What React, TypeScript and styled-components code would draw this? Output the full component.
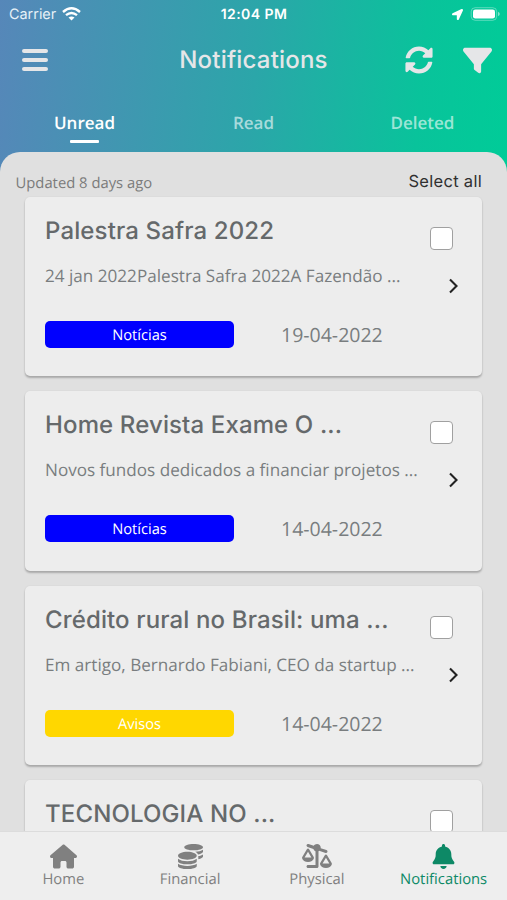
import React from 'react';
import styled, { createGlobalStyle } from 'styled-components';
import { FaCoins, FaLocationArrow, FaSyncAlt } from 'react-icons/fa';
import { FaBell, FaFilter, FaHouse, FaScaleUnbalancedFlip } from 'react-icons/fa6';

const GlobalStyle = createGlobalStyle`
  * { box-sizing: border-box; }
  html, body { margin: 0; padding: 0; }
  body {
    font-family: "Open Sans", "Noto Sans", sans-serif;
    text-rendering: geometricPrecision;
    overflow: hidden;
  }
  button { border: 0; padding: 0; background: none; font: inherit; color: inherit; text-rendering: inherit; letter-spacing: inherit; }
  svg { display: block; }
`;

const Screen = styled.div`
  width: 507px;
  height: 900px;
  display: flex;
  flex-direction: column;
  overflow: hidden;
  background: linear-gradient(95deg, #5687b9 0%, #2ba6a9 50%, #09c39b 82%, #00cc98 100%) 0 0 / 100% 180px no-repeat;
`;

const StatusBar = styled.div`
  height: 28px;
  padding: 0 7px 0 9px;
  display: grid;
  grid-template-columns: 1fr auto 1fr;
  align-items: center;
  color: #fff;
  font: 400 14.4px/28px Inter, sans-serif;
`;

const Carrier = styled.div`
  display: flex;
  align-items: center;
  gap: 6px;
  color: #e6f1f7;
`;

const CarrierName = styled.span`
  padding-top: 1px;
  line-height: 27px;
`;

const Clock = styled.div`
  margin-right: 1px;
  padding-top: 1px;
  line-height: 27px;
  font-weight: 600;
  font-size: 14px;
  letter-spacing: 0.45px;
`;

const Indicators = styled.div`
  display: flex;
  justify-content: flex-end;
  align-items: center;
  gap: 7px;
`;

const Header = styled.header`
  height: 64px;
  padding: 0 15px 0 22px;
  display: grid;
  grid-template-columns: 1fr auto 1fr;
  align-items: center;
  color: #e5e6e8;
`;

const MenuButton = styled.button`
  width: 26px;
  display: grid;
  gap: 5.3px;
`;

const MenuLine = styled.span`
  height: 4px;
  border-radius: 2px;
  background: #e5e6e8;
`;

const PageTitle = styled.h1`
  margin: 0 7px 0 0;
  font: 500 24px/30px Inter, sans-serif;
  letter-spacing: 0.2px;
`;

const Actions = styled.div`
  display: flex;
  justify-content: flex-end;
  align-items: center;
  gap: 30px;
`;

const Tabs = styled.nav`
  height: 60px;
  display: grid;
  grid-template-columns: repeat(3, 1fr);
`;

const Tab = styled.button<{ $active?: boolean }>`
  display: flex;
  flex-direction: column;
  align-items: center;
  padding-top: 19px;
  font-size: 17px;
  line-height: 24px;
  font-weight: 600;
  color: ${(p) => (p.$active ? '#fff' : 'rgba(255, 255, 255, 0.6)')};

  &::after {
    content: "";
    width: 29px;
    height: 3px;
    margin-top: 5px;
    border-radius: 1px;
    background: ${(p) => (p.$active ? '#fff' : 'transparent')};
  }
`;

const Sheet = styled.main`
  flex: 1;
  min-height: 0;
  overflow: hidden;
  border-radius: 20px 20px 0 0;
  background: #e0e0e0;
`;

const ListHeader = styled.div`
  height: 44.5px;
  padding: 0 25px 0 15.5px;
  display: flex;
  justify-content: space-between;
`;

const Updated = styled.span`
  padding-top: 20px;
  font-size: 14.8px;
  line-height: 22px;
  color: #7b7b7b;
`;

const SelectAll = styled.button`
  height: 22px;
  margin-top: 18px;
  font: 400 16.5px/22px Inter, sans-serif;
  letter-spacing: 0.3px;
  color: #303030;
`;

const List = styled.div`
  padding: 0 25px;
  display: flex;
  flex-direction: column;
  gap: 15px;
`;

const Card = styled.article`
  height: 179.5px;
  flex: none;
  padding: 16px 20px 0;
  display: grid;
  grid-template-columns: 1fr 32px;
  border-radius: 5px;
  background: #ededed;
  box-shadow: 0 2px 2px rgba(0, 0, 0, 0.24), 0 0 2px rgba(0, 0, 0, 0.07);
`;

const CardBody = styled.div`
  min-width: 0;
`;

const CardTitle = styled.h2`
  margin: 0;
  height: 36px;
  font: 500 24px/36px Inter, sans-serif;
  letter-spacing: 0.13px;
  color: #65696b;
  white-space: nowrap;
`;

const Excerpt = styled.p`
  margin: 16px 0 0;
  height: 24px;
  font-size: 17.13px;
  line-height: 24px;
  color: #797d7f;
  white-space: nowrap;
`;

const Meta = styled.div`
  margin-top: 32px;
  display: flex;
  align-items: center;
  gap: 47px;
`;

const Badge = styled.span<{ $color: string }>`
  width: 189px;
  height: 27px;
  border-radius: 5px;
  background: ${(p) => p.$color};
  color: #fff;
  text-align: center;
  font-size: 14.7px;
  line-height: 29px;
`;

const PostDate = styled.time`
  font-size: 19.5px;
  line-height: 27px;
  color: #797d7f;
`;

const CardControls = styled.div`
  display: flex;
  flex-direction: column;
  align-items: flex-end;
  padding-top: 14px;
`;

const Checkbox = styled.button`
  width: 23px;
  height: 23px;
  margin-right: 9px;
  border: 1.4px solid #a0a0a0;
  border-radius: 4px;
  background: #fff;
`;

const OpenIcon = styled.svg`
  margin: 27px 3px 0 0;
`;

const BottomNav = styled.nav`
  height: 68.5px;
  flex: none;
  padding-top: 12px;
  display: grid;
  grid-template-columns: repeat(4, 1fr);
  background: #eeeeee;
  box-shadow: 0 -1px 0 #dcdcdc;
  position: relative;
`;

const NavItem = styled.button<{ $active?: boolean }>`
  height: 46px;
  display: flex;
  flex-direction: column;
  align-items: center;
  font-size: 14.8px;
  line-height: 20px;
  color: ${(p) => (p.$active ? '#0d8966' : '#808080')};
`;

const NavIcon = styled.span`
  height: 25px;
  display: flex;
  align-items: center;
`;

const Wifi = () => (
  <svg width="19" height="14" viewBox="0 0 19 14" fill="none" stroke="#fff" strokeWidth="2.4">
    <path d="M1 5Q9.500-2.400 18 5" />
    <path d="M4 8.200Q9.500 3.600 15 8.200" />
    <path d="M9.500 13.600 6.500 10.600Q9.500 8.200 12.500 10.600Z" fill="#fff" stroke="none" />
  </svg>
);

const Battery = () => (
  <svg width="30" height="14" viewBox="0 0 30 14">
    <rect x="1.200" y=".7" width="25.500" height="12.600" rx="4" fill="none" stroke="#fff" strokeOpacity=".35" />
    <rect x="3" y="2.500" width="22" height="9" rx="2.300" fill="#fff" />
    <path d="M28 4.700Q29.800 5.500 29.800 7T28 9.300Z" fill="#fff" fillOpacity=".5" />
  </svg>
);

const posts = [
  { title: 'Palestra Safra 2022', text: '24 jan 2022Palestra Safra 2022A Fazendão ...', tag: 'Notícias', color: '#0000ff', date: '19-04-2022' },
  { title: 'Home Revista Exame O ...', text: 'Novos fundos dedicados a financiar projetos ...', tag: 'Notícias', color: '#0000ff', date: '14-04-2022' },
  { title: 'Crédito rural no Brasil: uma ...', text: 'Em artigo, Bernardo Fabiani, CEO da startup ...', tag: 'Avisos', color: '#ffd700', date: '14-04-2022' },
  { title: 'TECNOLOGIA NO ...' },
];

export default function App() {
  return (
    <>
      <GlobalStyle />
      <Screen>
        <StatusBar>
          <Carrier><CarrierName>Carrier</CarrierName><Wifi /></Carrier>
          <Clock>12:04 PM</Clock>
          <Indicators><FaLocationArrow size={11} /><Battery /></Indicators>
        </StatusBar>
        <Header>
          <MenuButton aria-label="Menu"><MenuLine /><MenuLine /><MenuLine /></MenuButton>
          <PageTitle>Notifications</PageTitle>
          <Actions><FaSyncAlt size={28} /><FaFilter size={29} /></Actions>
        </Header>
        <Tabs>
          <Tab $active>Unread</Tab>
          <Tab>Read</Tab>
          <Tab>Deleted</Tab>
        </Tabs>
        <Sheet>
          <ListHeader>
            <Updated>Updated 8 days ago</Updated>
            <SelectAll>Select all</SelectAll>
          </ListHeader>
          <List>
            {posts.map((post) => (
              <Card key={post.title}>
                <CardBody>
                  <CardTitle>{post.title}</CardTitle>
                  {post.text && <Excerpt>{post.text}</Excerpt>}
                  {post.color && (
                    <Meta>
                      <Badge $color={post.color}>{post.tag}</Badge>
                      <PostDate>{post.date}</PostDate>
                    </Meta>
                  )}
                </CardBody>
                <CardControls>
                  <Checkbox aria-label="Select" />
                  <OpenIcon width="11" height="18" viewBox="0 0 11 18" fill="none" stroke="#222" strokeWidth="2.1">
                    <path d="M2 2.500 8.500 9 2 15.500" />
                  </OpenIcon>
                </CardControls>
              </Card>
            ))}
          </List>
        </Sheet>
        <BottomNav>
          <NavItem><NavIcon><FaHouse size={27} /></NavIcon>Home</NavItem>
          <NavItem><NavIcon><FaCoins size={25} /></NavIcon>Financial</NavItem>
          <NavItem><NavIcon><FaScaleUnbalancedFlip size={30} /></NavIcon>Physical</NavItem>
          <NavItem $active><NavIcon><FaBell size={25} /></NavIcon>Notifications</NavItem>
        </BottomNav>
      </Screen>
    </>
  );
}
